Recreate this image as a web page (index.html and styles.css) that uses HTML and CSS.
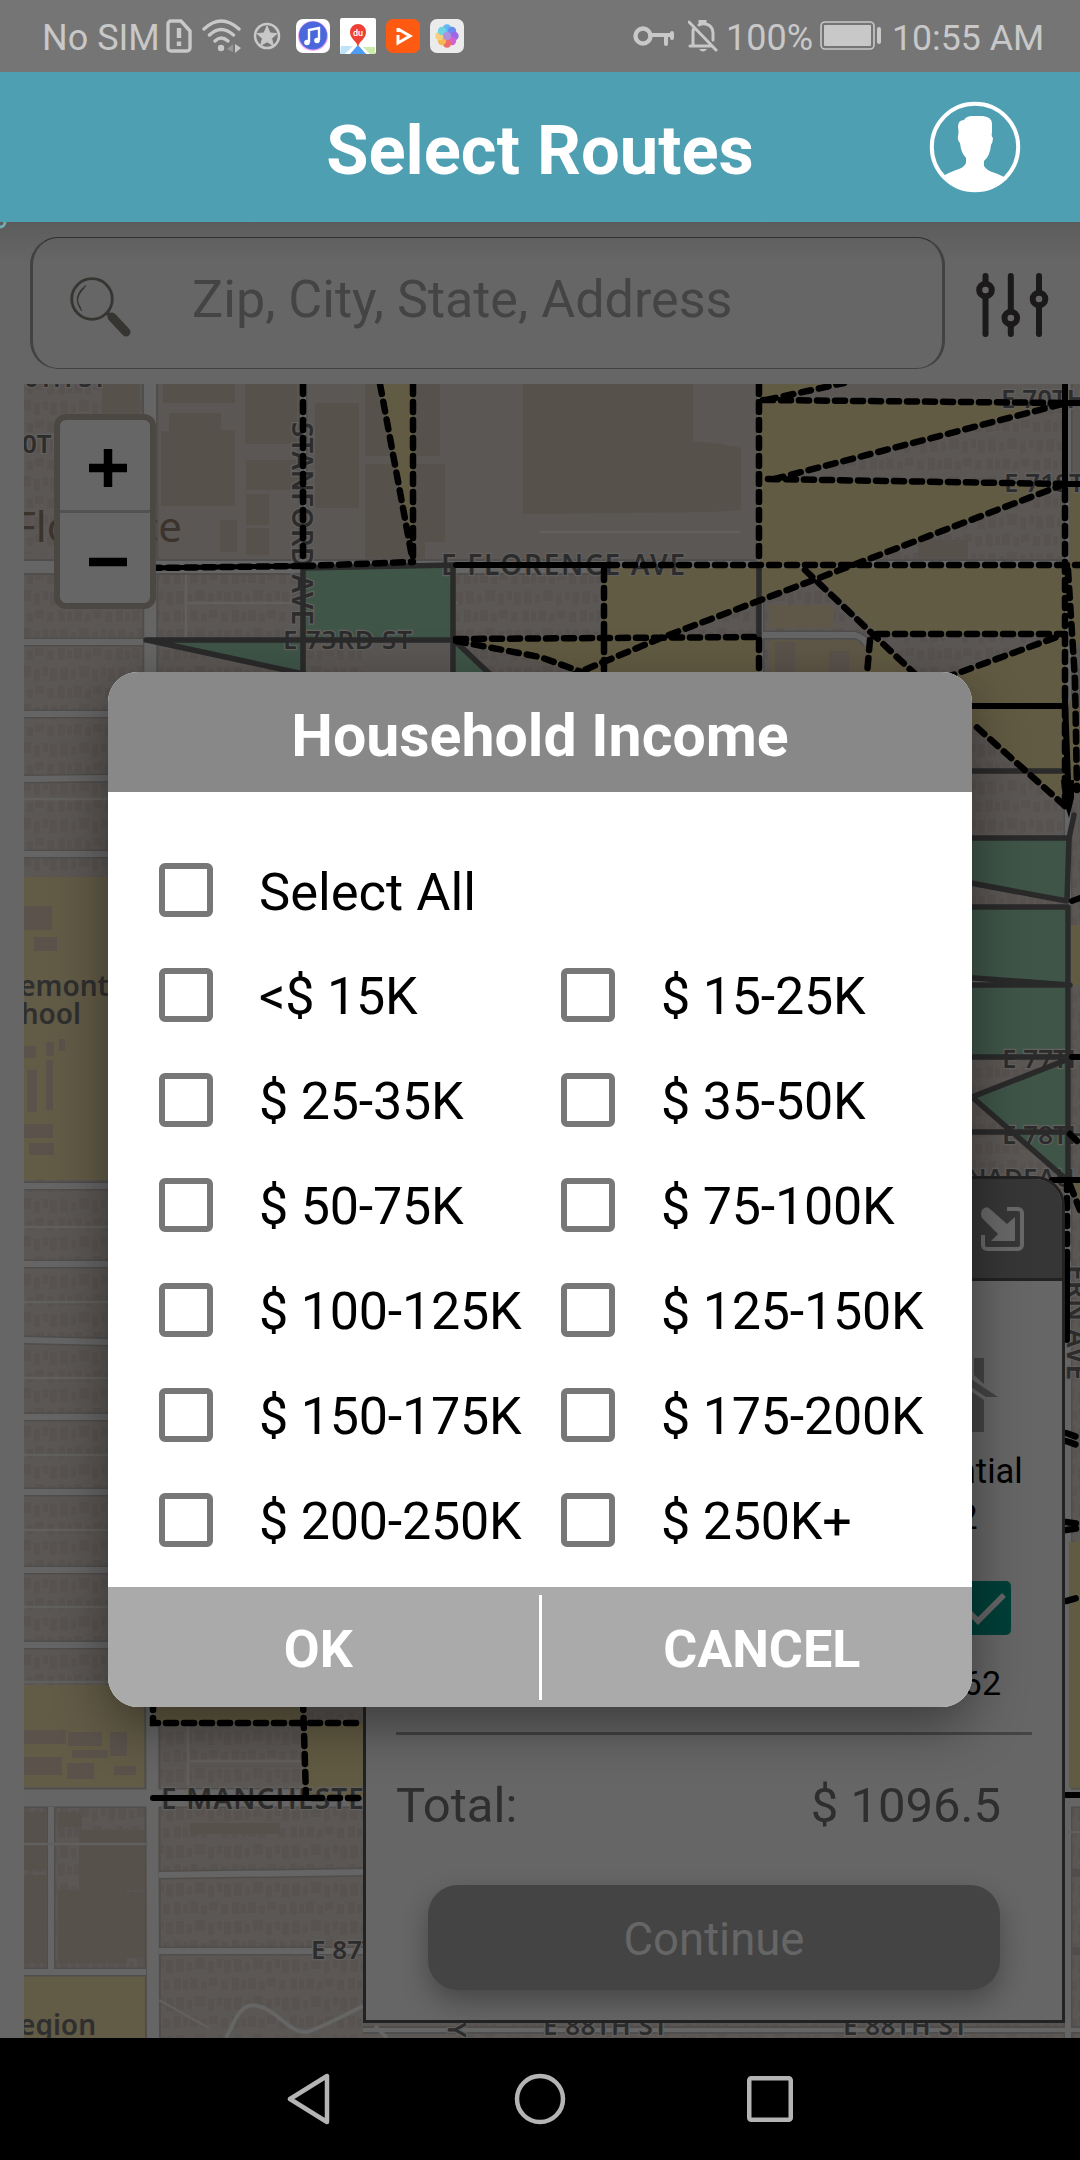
FILE: index.html
```html
<!DOCTYPE html>
<html lang="en">
<head>
<meta charset="utf-8">
<title>Select Routes</title>
<link rel="stylesheet" href="styles.css">
</head>
<body>
<div class="screen">
  <div class="status">
    <span class="status-text no-sim">No SIM</span>
    <svg class="ic-sim" width="26" height="34" viewBox="0 0 26 34" fill="none" stroke="#c8c8c8" stroke-width="3.4"><path d="M5 2h10l9 10v17a3 3 0 0 1-3 3H5a3 3 0 0 1-3-3V5a3 3 0 0 1 3-3z"/><path d="M13 9v10M13 22.500v4.500" stroke-width="4.400"/></svg>
    <svg class="ic-wifi" width="40" height="34" viewBox="0 0 40 34" fill="none" stroke="#c8c8c8" stroke-width="3.400" stroke-linecap="round"><path d="M2 10Q19-6 37 10M7.500 16Q19 5 31.500 16M13 22Q19 16 26 22"/><circle cx="19" cy="29" r="3.200" fill="#c8c8c8" stroke="none"/><path d="M31 25v8l-6-3z" fill="#c8c8c8" stroke="none" opacity=".4"/><path d="M33 25v9l6-5z" fill="#c8c8c8" stroke="none"/></svg>
    <svg class="ic-star" width="28" height="28" viewBox="0 0 28 28"><circle cx="14" cy="14" r="12" fill="none" stroke="#c8c8c8" stroke-width="2.600"/><path d="M14 4l3 7 7 .6-5.400 4.800 1.700 7.100L14 19.800l-6.300 3.700 1.700-7.100L4 11.600l7-.6z" fill="#c8c8c8" stroke="#c8c8c8"/></svg>
    <svg class="ic-app music" width="34" height="34" viewBox="0 0 34 34"><rect width="34" height="34" rx="7" fill="#fff"/><circle cx="17" cy="17" r="15" fill="#e9a6f0"/><circle cx="17" cy="16.500" r="14" fill="#4a68dc"/><path d="M13 23V11l10-2v12" fill="none" stroke="#fff" stroke-width="2.400"/><circle cx="11" cy="23.500" r="2.800" fill="#fff"/><circle cx="21" cy="21.500" r="2.800" fill="#fff"/></svg>
    <svg class="ic-app" width="36" height="36" viewBox="0 0 36 36"><rect width="36" height="36" rx="2" fill="#fff"/><path d="M1 28h12L5 36H0z" fill="#bfe4fa"/><path d="M18 27l8 9H10z" fill="#4d9df5"/><path d="M23 29h12v7h-5z" fill="#cdebaa"/><path d="M18 29c-1-6-8-8-8-15a8 8 0 0 1 16 0c0 7-7 9-8 15z" fill="#ee4034"/><text x="18" y="18" class="du">du</text></svg>
    <svg class="ic-app" width="34" height="34" viewBox="0 0 34 34"><rect width="34" height="34" rx="7" fill="#ff5a12"/><path d="M12 9v4M12 16v8l12-7-12-7" fill="none" stroke="#fff" stroke-width="3"/></svg>
    <svg class="ic-app" width="34" height="34" viewBox="0 0 34 34"><rect width="34" height="34" rx="7" fill="#ebebeb"/><g opacity=".88"><circle cx="17" cy="9.500" r="4.200" fill="#4cb4f5"/><circle cx="22" cy="12" r="4.200" fill="#5b7df0"/><circle cx="24.500" cy="17" r="4.200" fill="#9158e8"/><circle cx="22" cy="22" r="4.200" fill="#d04fd0"/><circle cx="17" cy="24.500" r="4.200" fill="#f05a5a"/><circle cx="12" cy="22" r="4.200" fill="#f5b13d"/><circle cx="9.500" cy="17" r="4.200" fill="#f7cc6a"/><circle cx="12" cy="12" r="4.200" fill="#5fd0e0"/><circle cx="17" cy="17" r="4" fill="#a884d8"/></g></svg>
    <span class="spacer"></span>
    <svg class="ic-key" width="42" height="20" viewBox="0 0 42 20" fill="none" stroke="#c8c8c8" stroke-width="4.400"><circle cx="10" cy="10" r="7.500"/><path d="M17 9h22M33 9v9M39 7v5" stroke-linecap="round" stroke-width="4"/></svg>
    <svg class="ic-bell" width="30" height="34" viewBox="0 0 30 34" fill="none" stroke="#c8c8c8" stroke-width="3"><path d="M2 27h21M5 26V13q0-2 1-4M11 6q3-2 7-1 7 2 7 9v7M12 5V2.500h5V5M1 3l27 28" stroke-linecap="round"/><path d="M11 30h8q-4 5-8 0z" fill="#c8c8c8" stroke="none"/></svg>
    <span class="status-text percent">100%</span>
    <svg class="ic-batt" width="62" height="30" viewBox="0 0 62 30"><rect x="1" y="1" width="53" height="27" rx="4" fill="none" stroke="#c8c8c8" stroke-width="1.600"/><rect x="4" y="4" width="47" height="21" rx="1" fill="#c8c8c8"/><rect x="57" y="6" width="4" height="17" rx="2" fill="#c8c8c8"/></svg>
    <span class="status-text clock">10:55 AM</span>
  </div>

  <header class="header">
    <h1 class="header-title">Select Routes</h1>
    <svg class="avatar" width="92" height="92" viewBox="0 0 92 92"><circle cx="46" cy="46" r="43.200" fill="none" stroke="#fff" stroke-width="4"/><path d="M29 26q0-7 6-7 2-4 9-4h10q9 1 9 8v8q-1 4 1 6 0 4-2 7-1 11-7 16v5q3 5 11 7 8 3 12 6Q65 90 46 90 27 90 14 75q5-3 13-6 8-2 10-7v-5q-5-5-6-15-3-3-2-7 1-3 0-9z" fill="#fff"/></svg>
  </header>

  <main class="content">
    <svg class="ring" width="8" height="8" viewBox="0 0 8 8"><circle cx="0" cy="0" r="5" fill="none" stroke="#74abb8" stroke-width="3"/></svg>
    <div class="search-row">
      <div class="search-box">
        <svg class="search-icon" width="64" height="66" viewBox="0 0 64 66" fill="none" stroke="#373532"><circle cx="22" cy="23" r="20.300" stroke-width="2.800"/><path d="M16 9.500Q1 21 12 35M14 12Q3 23 11 32" stroke-width="1.100"/><path d="M37 37l5 4" stroke-width="4"/><path d="M42 41l14 15" stroke-width="9" stroke-linecap="round"/></svg>
        <span class="placeholder">Zip, City, State, Address</span>
      </div>
      <svg class="sliders" width="74" height="66" viewBox="0 0 74 66" fill="#666" stroke="#1b1919" stroke-width="6" stroke-linecap="round"><path d="M10.500 4v58M35.800 4v58M64 4v58"/><circle cx="10.500" cy="18" r="6.300"/><circle cx="35.800" cy="46" r="6.300"/><circle cx="64" cy="27" r="6.300"/></svg>
    </div>

    <div class="map">
      <svg class="map-canvas" width="1056" height="1654" viewBox="24 384 1056 1654">
        <defs>
          <pattern id="homes" width="58" height="38" patternUnits="userSpaceOnUse">
            <path d="M0 2h7v12H0zM9 4h5v9H9zM16 2h8v11h-8zM27 5h6v9h-6zM35 2h9v8h-9zM47 4h7v10h-7zM2 21h8v13H2zM13 24h5v9h-5zM21 20h10v11H21zM34 23h6v12h-6zM43 21h5v9h-5zM50 22h7v13h-7z" fill="#585350"/>
          </pattern>
        </defs>
        <rect x="24" y="384" width="1056" height="1654" fill="#5b5754"/>
        <rect x="24" y="384" width="118" height="170" fill="url(#homes)"/>
        <rect x="24" y="575" width="340" height="1463" fill="url(#homes)"/>
        <rect x="456" y="575" width="624" height="1463" fill="url(#homes)"/>
        <rect x="765" y="404" width="300" height="155" fill="url(#homes)"/>
        <g fill="#57514c">
          <path d="M102 384h38v30h-38zM163 384h72v19h-72zM169 413h52v17h14v76h-74v-75h8zM245 384h52v60h-52zM246 460h54v30h-54zM246 494h23v31h-23zM220 520h17v32h-17zM246 528h23v27h-23zM315 403h44v105h-44zM365 384h75v72h-75zM365 464h80v78h-20v17h-60z"/>
          <path d="M523 384h170v57l27 3 21 4v62l-30 2-188 2z"/>
          <path d="M58 1812h24v15H58zM79 1830h66v60H79zM58 1890h49v74H58zM107 1885h20v79h-20zM127 1892h19v66h-19zM24 1812h22v58H24zM24 1875h22v88H24zM190 1823h90v11h-90zM918 540h50v20h-50z"/>
        </g>
        <g fill="#625b46">
          <path d="M24 877h110v303H24zM24 1685h122v102H24zM24 1976h122v62H24z"/>
          <path d="M770 605h64v23h-64zM770 640h97v40h-97z" fill="#5f5747"/>
        </g>
        <g fill="#5a524b">
          <path d="M24 906h28v24H24zM34 937h23v14H34zM24 1046h12v12H24zM46 1042h8v14h-8zM59 1039h6v12h-6zM27 1070h10v42H27zM46 1060h7v50h-7zM24 1124h29v14H24zM29 1143h25v12H29zM24 1730h42v14H24zM68 1732h34v14H68zM110 1732h17v24h-17zM72 1750h36v8H72zM24 1757h38v18H24zM67 1763h27v16H67zM114 1766h22v9h-22zM775 642h20v30h-20zM829 651h20v21h-20z"/>
        </g>
        <!-- road casing, then road surface -->
        <g fill="none" stroke="#504e4c">
          <path d="M150 384l1 800 2 854" stroke-width="16"/>
          <path d="M24 567h1056" stroke-width="16"/>
          <path d="M24 1798h1056" stroke-width="20"/>
          <path d="M24 642h119M24 714h84M24 779l84-1M24 854h84M24 1186h84M24 1264h84M24 1340l84 2M24 1417h84M24 1492h84M24 1570h84M24 1645h84M51 1807v162M24 1972h122M159 1875l210-3M159 1951h210M760 384v288M1068 384v1654M303 384v180M763 635h92q10 3 12 10" stroke-width="9"/>
          <path d="M1068 1560h12M1068 1873h12M1068 1951h12M363 2030h717" stroke-width="8"/>
        </g>
        <g fill="none" stroke="#656565">
          <path d="M150 384l1 800 2 854" stroke-width="12"/>
          <path d="M24 567h1056" stroke-width="12"/>
          <path d="M24 1798h1056" stroke-width="17"/>
          <path d="M24 642h119M24 714h84M24 779l84-1M24 854h84M24 1186h84M24 1264h84M24 1340l84 2M24 1417h84M24 1492h84M24 1570h84M24 1645h84M51 1807v162M24 1972h122M159 1875l210-3M159 1951h210M760 384v288M1068 384v1654M303 384v180M763 635h92q10 3 12 10" stroke-width="6"/>
          <path d="M226 2038l10-20q9-16 22-12 10 2 25 15 14 12 23 11 6 0 57-26M375 2026l12 12M363 2030h717" stroke-width="4"/>
        </g>
        <g fill="none" stroke="#62605e" stroke-width="2.500">
          <path d="M24 799h84M24 1227h84M24 1302h84M24 1378h84M24 1455h84M24 1530h84M24 1607h84M24 1682h84M188 603h270M186 575v65M24 1844h122M188 1710v75M190 1761h113M540 532h200M159 2000l50 28M1068 1832h12"/>
        </g>

        <g fill="#625b43">
          <path d="M380 384h33v178zM760 384h83l-79 16h-4zM760 400l303 3-297 77h-6zM760 480l305 4-212 81h-93zM604 568h155v36l-98 34h-57zM759 568h84l-84 34z"/>
          <path d="M456 640l303-3v40H600zM808 568h257v66H878zM870 640l8-4 40 40h-51zM940 680l125-46v172L940 700zM1069 484h11v160h-11zM1069 700h11v90h-11zM1072 1180h8v40zM1069 1542h11v246h-11zM1071 925h9v60h-9z"/>
          <path d="M155 1700h148v22H155zM306 1723h57v75h-57z"/>
        </g>
        <g fill="#3f5548">
          <path d="M303 568l151-3v75H303zM147 640h156v33zM456 643l35 33h-35zM960 838h109l-2 62-107-19zM960 907h108v150H960zM972 1097l95-37v120z"/>
        </g>
        <path d="M960 978l60 4-30 1h-30z" fill="#66625f"/>

        <g class="street minor">
          <text x="24" y="387" textLength="83">0TH ST</text>
          <text x="22" y="453">0TH ST</text>
          <text x="283" y="649" textLength="129">E 73RD ST</text>
          <text x="1001" y="408">E 70TH ST</text>
          <text x="1004" y="492">E 71ST ST</text>
          <text x="1002" y="1068">E 77TH ST</text>
          <text x="1002" y="1144">E 78TH ST</text>
          <text x="966" y="1187">NADEAU</text>
          <text x="311" y="1959">E 87TH</text>
          <text x="543" y="2035" textLength="125">E 88TH ST</text>
          <text x="843" y="2035" textLength="125">E 88TH ST</text>
          <text transform="translate(448 2022) rotate(90)">Y</text>
        </g>
        <g class="street">
          <text transform="translate(292 422) rotate(90)" textLength="203">STANFORD AVE</text>
          <text x="441" y="575" textLength="244">E FLORENCE AVE</text>
          <text transform="translate(1067 1265) rotate(90)" textLength="115">ERN AVE</text>
          <text x="161" y="1809" textLength="222">E MANCHESTER</text>
        </g>
        <text x="14" y="542" class="place">Florence</text>
        <g class="poi">
          <text x="109" y="996" text-anchor="end">Fremont</text>
          <text x="81" y="1024" text-anchor="end">School</text>
          <text x="96" y="2035" text-anchor="end">Region</text>
        </g>

        <g fill="none" stroke="#2a2a2a" stroke-width="5.500" stroke-linecap="round" stroke-linejoin="round">
          <path d="M303 680V568l150-3v115M146 640h308M147 640l175 38M455 641l40 38M759 565v72"/>
          <path d="M960 771h107M960 838h109l5-23M1069 838l-2 63-107-20M960 907h108v273M960 977l110 8H960M960 1057h110M1066 1060l-94 37 95 83M960 1132h110"/>
        </g>
        <g fill="none" stroke="#000" stroke-width="6" stroke-linecap="round">
          <path d="M456 565h148M1065 384v100M1062 403h18M1062 484h18M1072 901l8-3M1072 1057h8M1052 1180h28M153 1798h158M1066 1795h14M1067 1262v78M972 706h90M1065 700l3 80"/>
        </g>
        <path d="M146 568l157-2" stroke="#000" stroke-width="5"/>
        <path d="M1061 780h13v18l-5 20-6-20z"/>
        <g fill="none" stroke="#000" stroke-width="6.500" stroke-linecap="round" stroke-dasharray="10 8">
          <path d="M150 568l153-2M303 384v180M380 384l33 178M413 384v178M303 566l110-4"/>
          <path d="M759 384v180M759 640v32M763 400l302 3M766 400l78-17M1062 404l-295 77M768 479l297 5M1065 484l-212 81-192 73-91 38"/>
          <path d="M607 565h473M604 570v105M456 639l303-2M456 641l84 16 50 18M805 570l112 106M877 634h188l-115 42M870 640l-3 34"/>
          <path d="M1065 490v318M1068 570l7 110 2 110M1065 806l-93-83M1070 1134l10 10M1067 1180v80M1070 1185l10 25M1066 1433l14 5M1066 1441l14 5M1066 1522l14 2M1066 1530l14-2M1066 1601l14-4"/>
          <path d="M153 1700v23h210M303 1700l3 97M312 1798h51"/>
        </g>
      </svg>

      <div class="zoom">
        <div class="zoom-btn"><svg width="38" height="38" viewBox="0 0 38 38"><path d="M0 19h38M19 0v38" stroke="#000" stroke-width="8.500"/></svg></div>
        <div class="zoom-btn"><svg width="38" height="38" viewBox="0 0 38 38"><path d="M0 20h38" stroke="#000" stroke-width="8.500"/></svg></div>
      </div>

      <section class="panel">
        <div class="panel-head">
          <svg width="43" height="44" viewBox="0 0 43 44"><path d="M26 2h11a4 4 0 0 1 4 4v32a4 4 0 0 1-4 4H6a4 4 0 0 1-4-4V28" fill="none" stroke="#686868" stroke-width="4"/><path d="M1 3q4-5 8-1l17 15 8-7v24H10l7-7L1 11q-2-4 0-8z" fill="#686868"/></svg>
        </div>
        <div class="panel-body">
          <div class="kind">
            <svg class="house" width="120" height="76" viewBox="0 0 120 76" fill="#444"><path d="M96 1h10v26l-10-9zM60 0l60 40h-12L60 8 12 40H0zM14 44l46-32 46 31v32H14z"/></svg>
            <span class="kind-name">Residential</span>
            <span class="kind-count">2</span>
          </div>
          <div class="kind-check"><svg width="54" height="54" viewBox="0 0 54 54"><path d="M8 27l13 13 26-26" fill="none" stroke="#666" stroke-width="5.500"/></svg></div>
          <div class="kind-total">62</div>
          <hr class="rule">
          <div class="total"><span>Total:</span><span>$ 1096.5</span></div>
          <div class="continue">Continue</div>
        </div>
      </section>
    </div>
  </main>

  <nav class="nav">
    <svg width="44" height="52" viewBox="0 0 44 52" fill="none" stroke="#b4b4b4" stroke-width="4.500" stroke-linejoin="round"><path d="M40 3v46L3 26z"/></svg>
    <svg class="nav-home" width="52" height="52" viewBox="0 0 52 52" fill="none" stroke="#b4b4b4" stroke-width="4.500"><circle cx="26" cy="26" r="23"/></svg>
    <svg width="46" height="46" viewBox="0 0 46 46" fill="none" stroke="#b4b4b4" stroke-width="4.500"><rect x="2.250" y="2.250" width="41.500" height="41.500" rx="2"/></svg>
  </nav>

  <div class="dialog">
    <h2 class="dialog-title">Household Income</h2>
    <div class="options">
      <label class="option wide"><i class="box"></i><span class="name">Select All</span></label>
      <label class="option"><i class="box"></i><span class="name">&lt;$ 15K</span></label><label class="option"><i class="box"></i><span class="name">$ 15-25K</span></label>
      <label class="option"><i class="box"></i><span class="name">$ 25-35K</span></label><label class="option"><i class="box"></i><span class="name">$ 35-50K</span></label>
      <label class="option"><i class="box"></i><span class="name">$ 50-75K</span></label><label class="option"><i class="box"></i><span class="name">$ 75-100K</span></label>
      <label class="option"><i class="box"></i><span class="name">$ 100-125K</span></label><label class="option"><i class="box"></i><span class="name">$ 125-150K</span></label>
      <label class="option"><i class="box"></i><span class="name">$ 150-175K</span></label><label class="option"><i class="box"></i><span class="name">$ 175-200K</span></label>
      <label class="option"><i class="box"></i><span class="name">$ 200-250K</span></label><label class="option"><i class="box"></i><span class="name">$ 250K+</span></label>
    </div>
    <div class="actions">
      <span class="action">OK</span>
      <span class="divider"></span>
      <span class="action">CANCEL</span>
    </div>
  </div>
</div>
</body>
</html>
```

FILE: styles.css
```css
* { box-sizing: border-box; }
body { margin: 0; background: #000; font-family: Roboto, "Liberation Sans", sans-serif; }
svg { display: block; flex: none; }
.screen { position: relative; width: 1080px; height: 2160px; display: flex; flex-direction: column; overflow: hidden; }

/* status bar */
.status { height: 72px; flex: none; display: flex; align-items: center; padding: 0 36px 0 42px; background: #757575; color: #c8c8c8; }
.status-text { padding-top: 3px; font-size: 36px; line-height: 42px; white-space: nowrap; }
.no-sim { width: 124px; }
.ic-wifi { margin-left: 10px; }
.ic-star { margin-left: 11px; }
.ic-app { margin-left: 10px; }
.ic-app.music { margin-left: 15px; }
.du { font: 500 9px Roboto, sans-serif; fill: #fff; text-anchor: middle; }
.spacer { flex: 1; }
.ic-bell { margin: 0 8px 0 13px; }
.percent { width: 86px; }
.ic-batt { margin-left: 8px; }
.clock { width: 151px; margin-left: 10px; margin-right: 1px; font-size: 35.700px; }

/* header */
.header { height: 150px; flex: none; display: grid; grid-template-columns: 151px 1fr 92px; align-items: center; padding-right: 59px; background: #4f9fb3; }
.header-title { grid-column: 2; margin: 0; padding-top: 7px; text-align: center; color: #fff; font-size: 68.700px; font-weight: 700; line-height: 80px; }

/* content */
.content { position: relative; height: 1816px; flex: none; background: linear-gradient(#5c5c5c, #666 40px); }
.ring { position: absolute; left: 0; top: 0; }
.search-row { height: 162px; display: flex; align-items: center; padding: 0 31px 0 30px; justify-content: space-between; }
.search-box { width: 915px; height: 132px; display: flex; align-items: center; border: solid #424242; border-width: 1px 3px; border-top-color: #303030; border-radius: 28px; }
.search-icon { margin: 12px 0 0 37px; }
.sliders { margin-top: 3px; }
.placeholder { margin: -8px 0 0 58px; font-size: 52.100px; color: #444; white-space: nowrap; }
.map { position: relative; height: 1654px; margin-left: 24px; overflow: hidden; }
.street { font: 600 28px "Noto Sans", sans-serif; fill: #2d2c2c; stroke: #62605e; stroke-width: 2.500px; paint-order: stroke; }
.street.minor { font-size: 26px; }
.place { font: 42px "Noto Sans", sans-serif; fill: #3b332c; }
.poi { font: 600 28px "Noto Sans", sans-serif; fill: #2f2f30; }
.zoom { position: absolute; left: 30px; top: 30px; width: 102px; height: 195px; border: 6px solid #4b4743; border-radius: 12px; background: #666; display: flex; flex-direction: column; }
.zoom-btn { height: 93px; display: flex; align-items: center; justify-content: center; padding: 6px 0 0 6px; border-bottom: 3px solid #525252; }
.zoom-btn + .zoom-btn { height: 90px; padding-top: 6px; border-bottom: 0; }

/* order summary */
.panel { position: absolute; right: 15px; bottom: 15px; width: 702px; height: 847px; border: 3px solid #222; border-radius: 30px 30px 0 0; overflow: hidden; background: #666; }
.panel-head { height: 102px; display: flex; justify-content: flex-end; align-items: flex-start; padding: 28px 38px 0; background: #363636; border-bottom: 3px solid #222; }
.panel-body { padding: 76px 30px 0; display: flex; flex-direction: column; }
.kind { align-self: flex-end; width: 166px; display: flex; flex-direction: column; align-items: center; margin-right: 11px; font-size: 34.500px; line-height: 46px; }
.house { margin-bottom: 15px; }
.kind-count { padding-left: 60px; }
.kind-check { align-self: flex-end; width: 54px; height: 54px; margin: 41px 21px 0 0; border-radius: 5px; background: #003f38; }
.kind-total { align-self: flex-end; margin: 28px 31px 0 0; font-size: 34px; line-height: 40px; }
.rule { width: 636px; height: 3px; margin: 29px 0 0; border: 0; background: #444; }
.total { display: flex; justify-content: space-between; margin: 41px 31px 0 0; font-size: 49px; line-height: 60px; color: #2e2e2e; }
.continue { width: 572px; height: 105px; margin: 49px 0 0 32px; border-radius: 30px; background: #444; color: #666; font-size: 45.500px; line-height: 110px; text-align: center; box-shadow: 0 12px 28px rgba(0, 0, 0, .3); }

/* system navigation */
.nav { height: 122px; flex: none; display: flex; align-items: center; gap: 181px; padding: 0 0 0 287px; background: #000; }
.nav-home { margin-left: 2px; }

/* income filter */
.dialog { position: absolute; left: 108px; top: 672px; width: 864px; height: 1035px; border-radius: 30px; overflow: hidden; background: #fff; box-shadow: 0 18px 54px rgba(0, 0, 0, .42); display: flex; flex-direction: column; }
.dialog-title { height: 120px; flex: none; margin: 0; background: #888; color: #fff; text-align: center; font-size: 59px; line-height: 128px; font-weight: 700; }
.options { height: 795px; padding: 45px 0 15px 51px; display: grid; grid-template-columns: 402px 402px; grid-auto-rows: 105px; }
.option { display: flex; align-items: center; gap: 46px; font-size: 52px; letter-spacing: -.2px; line-height: 62px; color: #000; white-space: nowrap; }
.name { padding-top: 5px; }
.option.wide { grid-column: 1 / 3; font-size: 52.500px; letter-spacing: 0; }
.box { width: 54px; height: 54px; flex: none; border: 6px solid #777; border-radius: 6px; }
.actions { height: 120px; flex: none; display: grid; grid-template-columns: 1fr 3px 1fr; align-items: center; background: #aaa; }
.divider { height: 105px; background: #fff; }
.action { padding-top: 5px; text-align: center; color: #fff; font-size: 52px; font-weight: 700; line-height: 60px; }
.action:first-child { padding-right: 10px; }
.action:last-child { padding-left: 10px; }
```
